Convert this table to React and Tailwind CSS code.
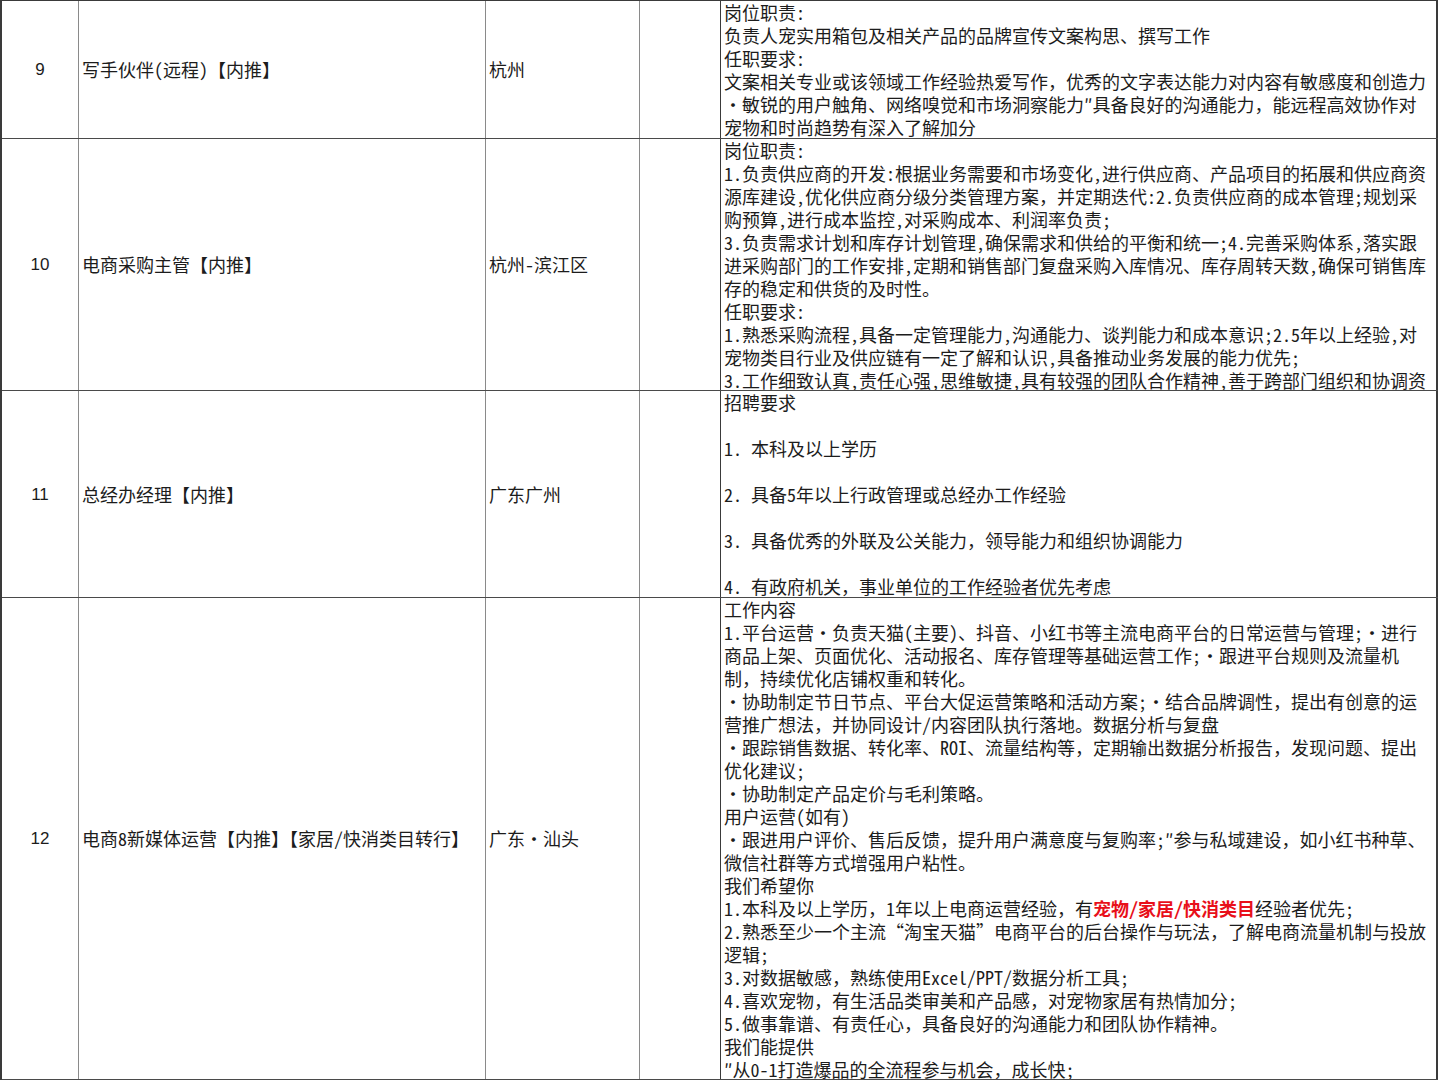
const FONT =
  "font-['Noto_Sans_Mono_CJK_SC','Noto_Sans_CJK_SC','Liberation_Sans',sans-serif]";

const rows = [
  {
    no: "9",
    title: "写手伙伴(远程)【内推】",
    city: "杭州",
    h: "h-[138px]",
    lines: [
      "岗位职责:",
      "负责人宠实用箱包及相关产品的品牌宣传文案构思、撰写工作",
      "任职要求:",
      "文案相关专业或该领域工作经验热爱写作，优秀的文字表达能力对内容有敏感度和创造力",
      "・敏锐的用户触角、网络嗅觉和市场洞察能力″具备良好的沟通能力，能远程高效协作对",
      "宠物和时尚趋势有深入了解加分",
    ],
  },
  {
    no: "10",
    title: "电商采购主管【内推】",
    city: "杭州-滨江区",
    h: "h-[252px]",
    lines: [
      "岗位职责:",
      "1.负责供应商的开发:根据业务需要和市场变化,进行供应商、产品项目的拓展和供应商资",
      "源库建设,优化供应商分级分类管理方案，并定期迭代:2.负责供应商的成本管理;规划采",
      "购预算,进行成本监控,对采购成本、利润率负责;",
      "3.负责需求计划和库存计划管理,确保需求和供给的平衡和统一;4.完善采购体系,落实跟",
      "进采购部门的工作安排,定期和销售部门复盘采购入库情况、库存周转天数,确保可销售库",
      "存的稳定和供货的及时性。",
      "任职要求:",
      "1.熟悉采购流程,具备一定管理能力,沟通能力、谈判能力和成本意识;2.5年以上经验,对",
      "宠物类目行业及供应链有一定了解和认识,具备推动业务发展的能力优先;",
      "3.工作细致认真,责任心强,思维敏捷,具有较强的团队合作精神,善于跨部门组织和协调资",
    ],
  },
  {
    no: "11",
    title: "总经办经理【内推】",
    city: "广东广州",
    h: "h-[207px]",
    lines: [
      "招聘要求",
      "",
      "1. 本科及以上学历",
      "",
      "2. 具备5年以上行政管理或总经办工作经验",
      "",
      "3. 具备优秀的外联及公关能力，领导能力和组织协调能力",
      "",
      "4. 有政府机关，事业单位的工作经验者优先考虑",
    ],
  },
  {
    no: "12",
    title: "电商8新媒体运营【内推】【家居/快消类目转行】",
    city: "广东・汕头",
    h: "h-[482px]",
    lines: [
      "工作内容",
      "1.平台运营・负责天猫(主要)、抖音、小红书等主流电商平台的日常运营与管理;・进行",
      "商品上架、页面优化、活动报名、库存管理等基础运营工作;・跟进平台规则及流量机",
      "制，持续优化店铺权重和转化。",
      "・协助制定节日节点、平台大促运营策略和活动方案;・结合品牌调性，提出有创意的运",
      "营推广想法，并协同设计/内容团队执行落地。数据分析与复盘",
      "・跟踪销售数据、转化率、ROI、流量结构等，定期输出数据分析报告，发现问题、提出",
      "优化建议;",
      "・协助制定产品定价与毛利策略。",
      "用户运营(如有)",
      "・跟进用户评价、售后反馈，提升用户满意度与复购率;″参与私域建设，如小红书种草、",
      "微信社群等方式增强用户粘性。",
      "我们希望你",
      "RED",
      "2.熟悉至少一个主流“淘宝天猫”电商平台的后台操作与玩法，了解电商流量机制与投放",
      "逻辑;",
      "3.对数据敏感，熟练使用Excel/PPT/数据分析工具;",
      "4.喜欢宠物，有生活品类审美和产品感，对宠物家居有热情加分;",
      "5.做事靠谱、有责任心，具备良好的沟通能力和团队协作精神。",
      "我们能提供",
      "″从0-1打造爆品的全流程参与机会，成长快;",
    ],
  },
];

const Line = ({ text }) => {
  if (text === "RED") {
    return (
      <div className="h-[23px] whitespace-pre">
        1.本科及以上学历，1年以上电商运营经验，有
        <span className="font-bold text-[#e8101a]">宠物/家居/快消类目</span>
        经验者优先;
      </div>
    );
  }
  return <div className="h-[23px] whitespace-pre">{text}</div>;
};

export default function App() {
  return (
    <div className={`h-[1080px] w-[1438px] overflow-hidden bg-white text-[18px] leading-[23px] text-[#1c1c1c] ${FONT}`}>
      <div className="border-l-2 border-t border-[#3a3a3a]">
        {rows.map((r) => (
          <div key={r.no} className={`flex ${r.h} border-b border-[#4a4a4a]`}>
            <div className="flex w-[77px] shrink-0 items-center justify-center border-r border-[#8a8a8a] font-['Liberation_Sans',sans-serif] text-[17px]">
              {r.no}
            </div>
            <div className="flex w-[407px] shrink-0 items-center border-r border-[#8a8a8a] pl-[3px] whitespace-nowrap">
              {r.title}
            </div>
            <div className="flex w-[154px] shrink-0 items-center border-r border-[#8a8a8a] pl-[3px] whitespace-nowrap">
              {r.city}
            </div>
            <div className="w-[81px] shrink-0 border-r border-[#3a3a3a]" />
            <div className="min-w-0 flex-1 overflow-hidden border-r-2 border-[#3a3a3a] pl-[3px]">
              {r.lines.map((t, i) => (
                <Line key={i} text={t} />
              ))}
            </div>
          </div>
        ))}
      </div>
    </div>
  );
}
